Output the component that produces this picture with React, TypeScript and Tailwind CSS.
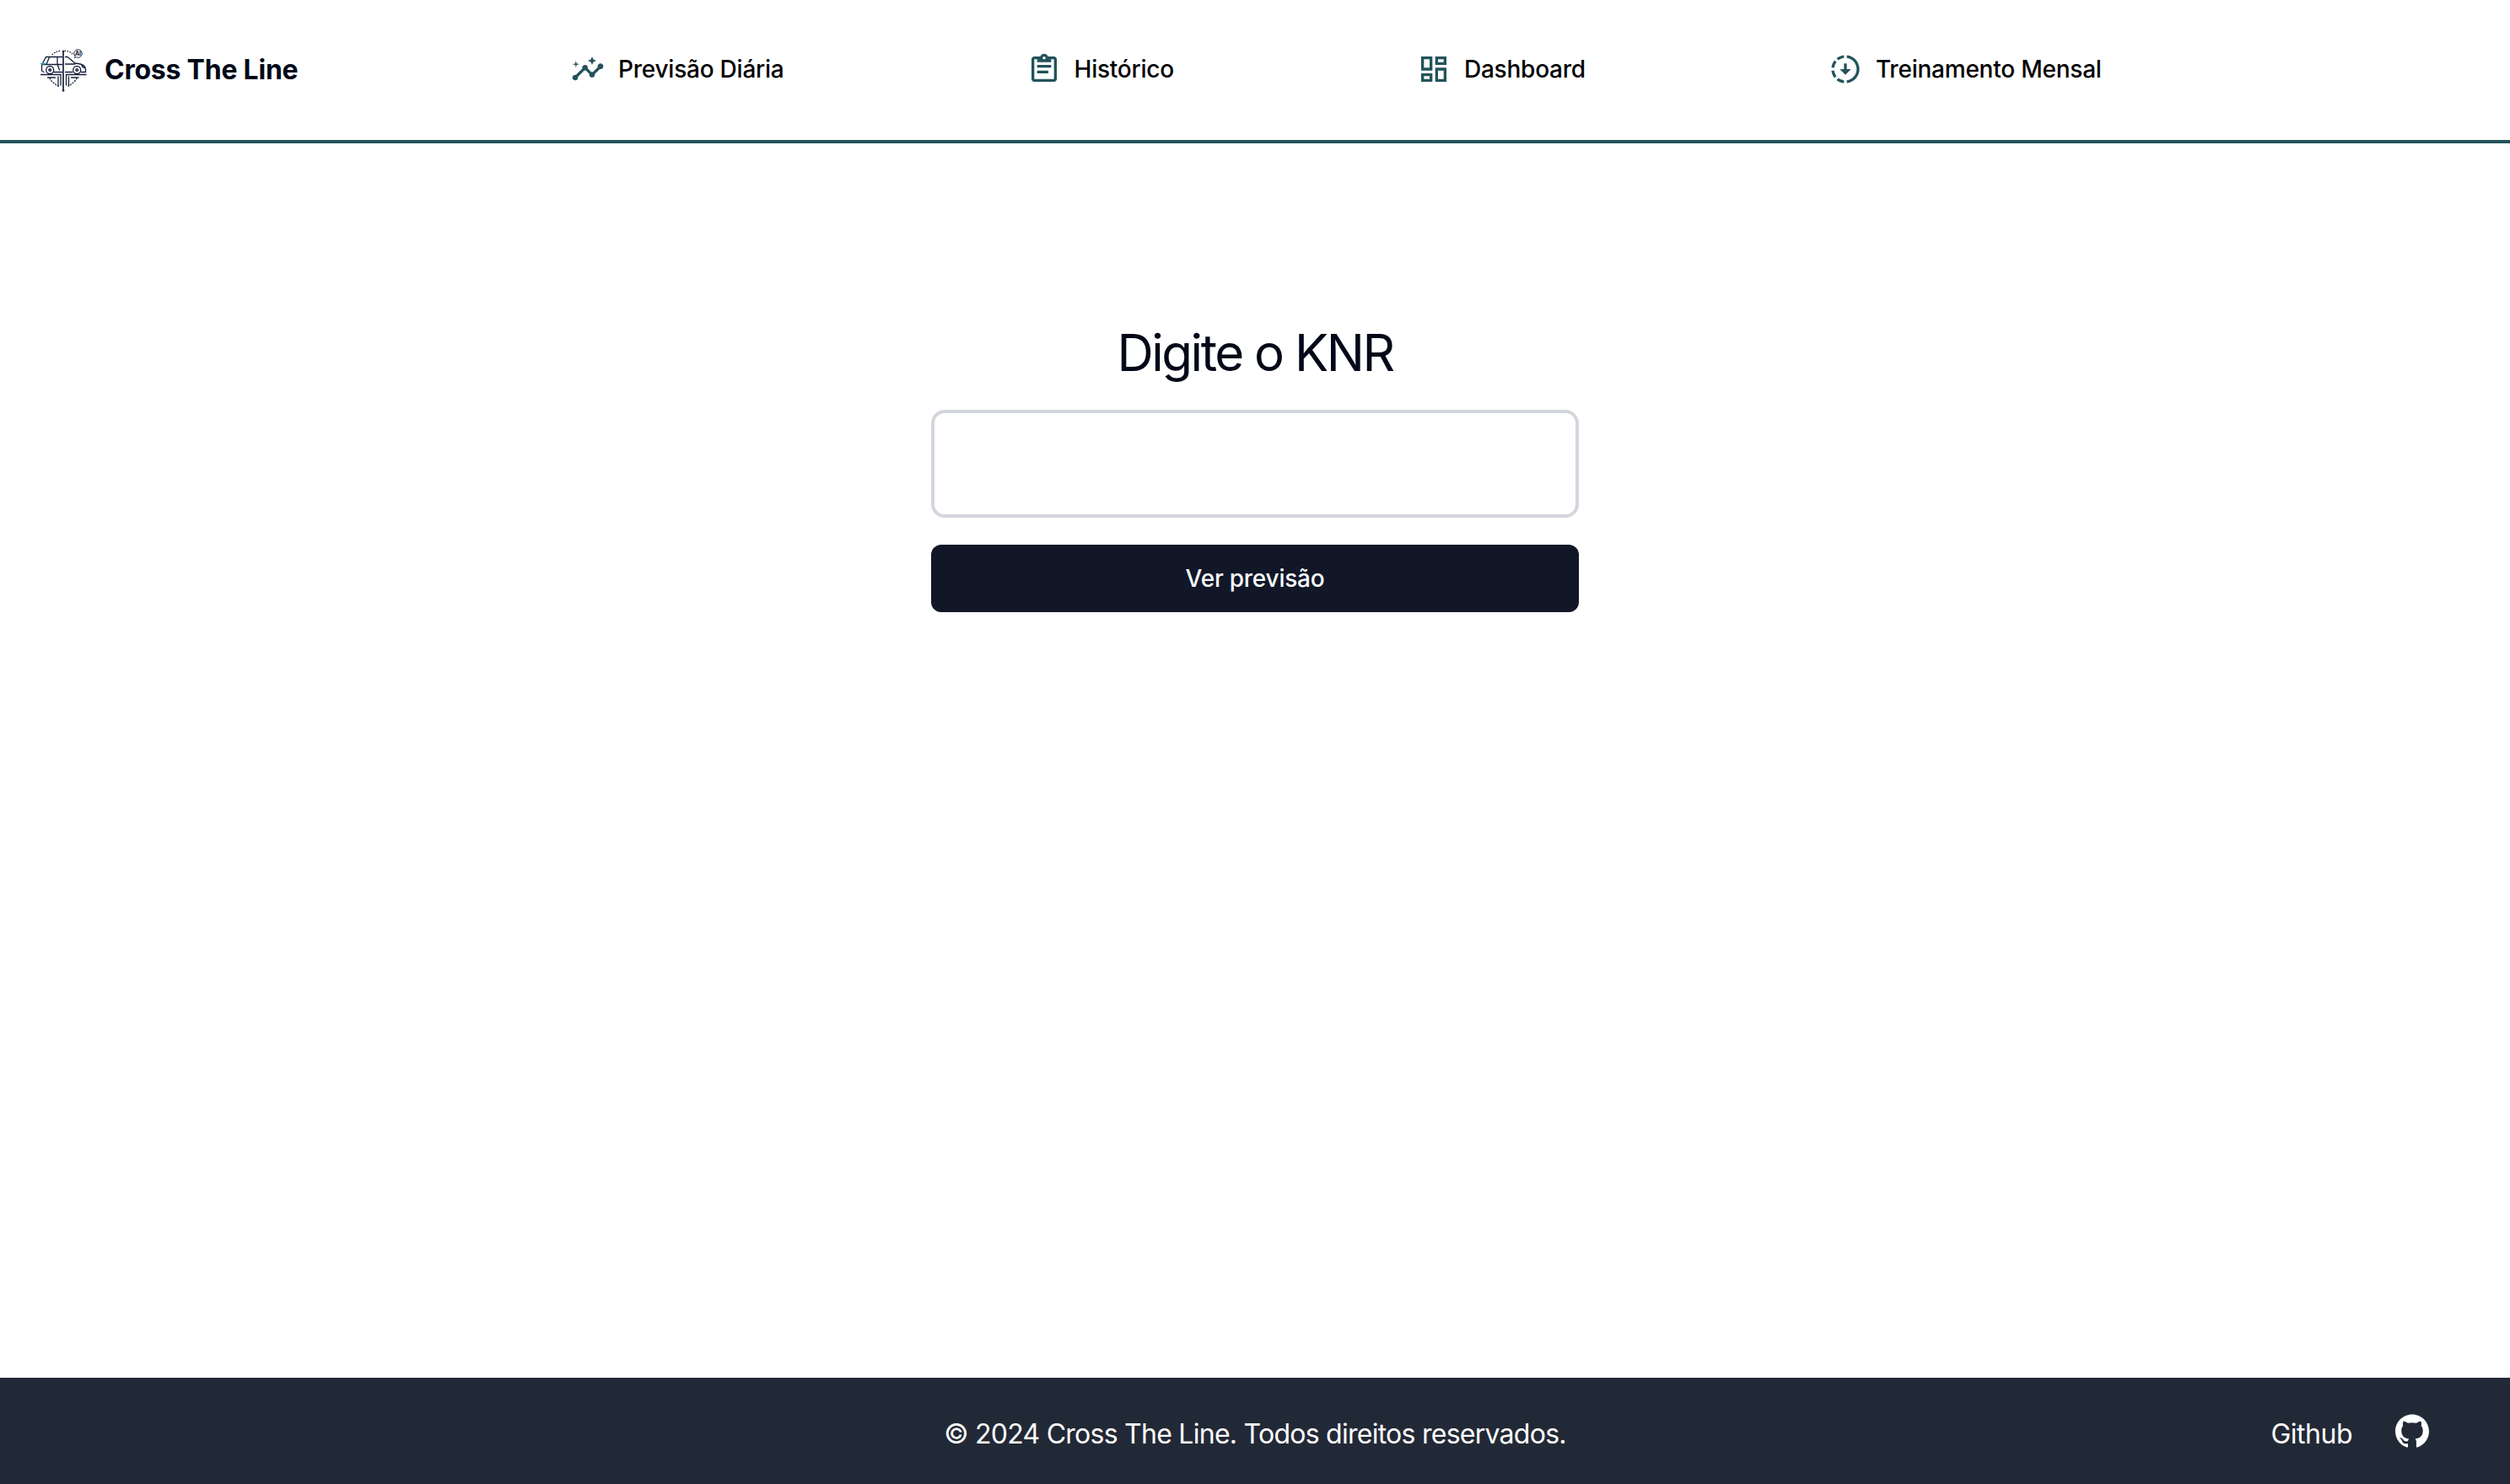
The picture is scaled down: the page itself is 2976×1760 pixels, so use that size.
import type { ReactNode } from "react";
import { MdInsights, MdOutlineDashboard } from "react-icons/md";
import { SiGithub } from "react-icons/si";

function Logo() {
  return (
    <svg
      viewBox="0 0 60 60"
      className="mb-1 h-[60px] w-[60px]"
      fill="none"
      stroke="#16203a"
      strokeWidth="1.3"
      strokeLinecap="round"
      strokeLinejoin="round"
    >
      {/* dotted heart-shaped outline */}
      <path d="M18 13.5C22 10.5 25 9.4 29 9.2M33 9.2c4 .4 7 1.6 10 4.6M44.500 17l1.2 2" strokeDasharray="0.6 2.4" />
      <path d="M15 42c2 4 7 7.5 11 9.5M47 42c-2 3.5-6 7-10 9" strokeDasharray="1 2.2" />
      {/* car body */}
      <path d="M5.5 26L10.500 16.500H29.500M5.500 26V33l2.500 1.500M19.500 34.500H29.500M6 25.500H29.500" />
      <path d="M14.500 17L11 25M24 17v8l2.500 7" />
      <path d="M33.500 16.500h2.500l9 7.500c5 .3 9 1 11.500 4l1 3v3.500h-5.500M33.500 34.500H42M33.500 25H45M53 26.500c.5 2 1.500 3 4 3" />
      <path d="M5 24.500h4" stroke="#3fa9bd" strokeWidth="2.2" />
      <circle cx="15.2" cy="32" r="4.5" />
      <circle cx="15.2" cy="32" r="1.3" strokeWidth="1.5" />
      <circle cx="47.2" cy="32" r="4.5" />
      <circle cx="47.2" cy="32" r="1.3" strokeWidth="1.5" />
      {/* ground and circuit lines */}
      <path d="M4.500 37.500H28V50M58 37.500H34.500V50" />
      <path d="M12.500 41H21.500M25 40v11M49 41H40.500M37.500 40v11" />
      <path d="M31 9.500V56" strokeWidth="1.7" />
      <circle cx="31" cy="10" r="1" fill="#16203a" strokeWidth="0.5" />
      <circle cx="31" cy="56.500" r="1" fill="#16203a" strokeWidth="0.5" />
      <circle cx="48.500" cy="12.500" r="4.8" strokeWidth="1" strokeDasharray="4 0.9" />
      <text
        x="48.5"
        y="15"
        textAnchor="middle"
        fill="#16203a"
        stroke="none"
        className="font-['Inter'] text-[7px] font-bold"
      >
        AI
      </text>
    </svg>
  );
}

function ClipboardIcon() {
  return (
    <svg viewBox="0 0 24 24" width="1em" height="1em" fill="currentColor">
      <path
        fillRule="evenodd"
        d="M19 3h-4.180C14.400 1.840 13.300 1 12 1s-2.400.840-2.820 2H5c-1.100 0-2 .9-2 2v14c0 1.100.9 2 2 2h14c1.100 0 2-.9 2-2V5c0-1.100-.9-2-2-2zm-7 0c.55 0 1 .45 1 1s-.45 1-1 1-1-.45-1-1 .45-1 1-1zM5 5h2v2h10V5h2v14H5z"
      />
      <path d="M7 9h10v2H7zM7 13h8v2H7z" />
    </svg>
  );
}

function DownloadProgressIcon() {
  return (
    <svg viewBox="0 0 24 24" width="1em" height="1em" fill="currentColor">
      <path
        transform="matrix(-1 0 0 1 24 0)"
        d="M18.320 4.260C16.840 3.050 15.010 2.250 13 2.050v2.020c1.460.18 2.790.76 3.900 1.620l1.420-1.430zM19.930 11h2.020c-.2-2.010-1-3.840-2.210-5.320L18.310 7.100c.86 1.110 1.440 2.440 1.620 3.900zM18.310 16.900l1.430 1.430c1.210-1.480 2.010-3.320 2.210-5.320h-2.020c-.18 1.450-.76 2.780-1.620 3.890zM13 19.930v2.020c2.010-.2 3.840-1 5.320-2.210l-1.430-1.430c-1.100.86-2.430 1.440-3.890 1.620zM11 19.930v2.020c-5.050-.5-9-4.760-9-9.950s3.950-9.450 9-9.950v2.020C7.050 4.560 4 7.920 4 12s3.050 7.440 7 7.930z"
      />
      <path d="M11 8v4H8l4 4 4-4h-3V8z" />
    </svg>
  );
}

function NavItem({ icon, label }: { icon: ReactNode; label: string }) {
  return (
    <a className="flex items-center gap-4 text-[28px] leading-10 font-medium tracking-[-0.23px] whitespace-nowrap text-black">
      <span className="text-[40px] text-[#23535b]">{icon}</span>
      {label}
    </a>
  );
}

export default function App() {
  return (
    <div className="flex h-[1760px] w-[2976px] flex-col bg-white font-['Inter',sans-serif] text-[#020817]">
      <header className="flex h-[170px] items-center border-b-4 border-[#23535b] pl-[44px]">
        <div className="flex w-[633px] items-center gap-5">
          <Logo />
          <span className="text-[32px] leading-10 font-bold tracking-[-0.23px] whitespace-nowrap">Cross The Line</span>
        </div>
        <nav className="flex items-center gap-[288px] pb-0.5">
          <NavItem icon={<MdInsights />} label="Previsão Diária" />
          <NavItem icon={<ClipboardIcon />} label="Histórico" />
          <NavItem icon={<MdOutlineDashboard />} label="Dashboard" />
          <NavItem icon={<DownloadProgressIcon />} label="Treinamento Mensal" />
        </nav>
      </header>

      <main className="flex flex-1 flex-col items-center pt-[212px]">
        <h1 className="text-[60px] leading-[72px] font-normal tracking-[-2.5px]">Digite o KNR</h1>
        <input
          type="text"
          aria-label="KNR"
          className="mt-8 h-32 w-[768px] rounded-2xl border-4 border-[#d3d6dc] bg-white px-8 outline-none"
        />
        <button className="mt-8 h-20 w-[768px] rounded-xl bg-[#121728] text-[28px] font-medium tracking-[-0.23px] text-[#f8fafc]">
          Ver previsão
        </button>
      </main>

      <footer className="grid h-[126px] grid-cols-3 items-center bg-[#222936] text-[32px] leading-12 text-white">
        <span />
        <p className="pt-2 text-center tracking-[-0.74px] whitespace-nowrap">
          © 2024 Cross The Line. Todos direitos reservados.
        </p>
        <div className="flex items-center justify-end gap-[51px] pr-[96px]">
          <span className="pt-2 tracking-[-0.5px]">Github</span>
          <SiGithub className="h-10 w-10" />
        </div>
      </footer>
    </div>
  );
}
